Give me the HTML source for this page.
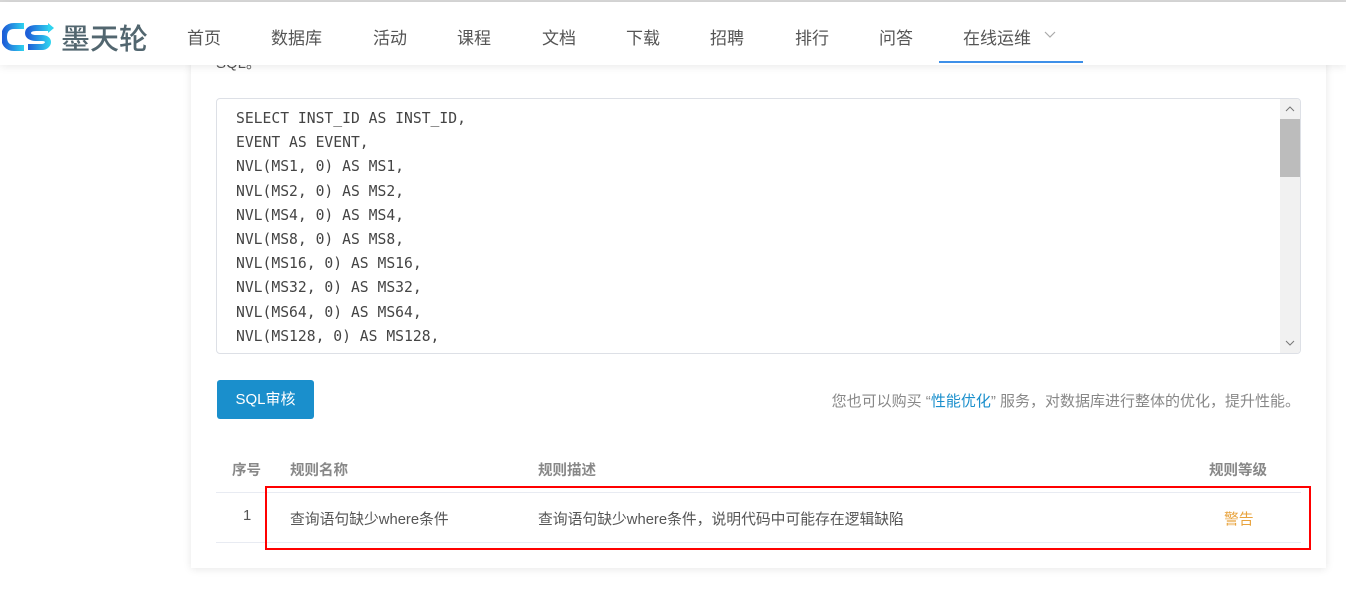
<!DOCTYPE html>
<html><head><meta charset="utf-8"><style>
*{box-sizing:border-box;margin:0;padding:0}
body{width:1346px;height:591px;overflow:hidden;background:#fff;font-family:"Liberation Sans","Noto Sans CJK SC",sans-serif;position:relative}
.top{position:absolute;left:0;top:0;width:1346px;height:2px;background:#d8d8d8}
.hdr{position:absolute;left:0;top:2px;width:1346px;height:63px;background:#fff;box-shadow:0 2px 8px rgba(0,0,0,.08);z-index:5}
.nav{position:absolute;top:22px;font-size:17px;color:#555}
.ul{position:absolute;left:939px;top:61px;width:144px;height:2px;background:#3d8fe8}
.card{position:absolute;left:191px;top:40px;width:1135px;height:528px;background:#fff;box-shadow:0 1px 8px rgba(0,0,0,.1)}
.ta{position:absolute;left:216px;top:98px;width:1085px;height:256px;border:1px solid #dde0e6;border-radius:4px;overflow:hidden;background:#fff}
.code{position:absolute;left:19px;top:8px;font-family:"DejaVu Sans Mono","Liberation Mono",monospace;font-size:14.7px;line-height:24.2px;color:#444;white-space:pre}
.sb{position:absolute;right:0;top:0;width:20px;height:254px;background:#f1f1f1}
.btn{position:absolute;left:217px;top:380px;width:97px;height:39px;background:#1a8fcc;border-radius:3px;color:#fff;font-size:15px;text-align:center;line-height:39px}
.tip{position:absolute;right:46px;top:390px;font-size:15px;color:#888}
.th{position:absolute;top:459px;font-size:14.5px;color:#888;font-weight:bold}
.td{position:absolute;top:508px;font-size:14.8px;color:#555}
.line{position:absolute;left:216px;width:1085px;height:1px;background:#e8ebf2}
.red{position:absolute;left:265px;top:486px;width:1046px;height:64px;border:2px solid #f00}
</style></head><body>
<div class="top"></div>
<div class="card"></div>
<div style="position:absolute;left:216px;top:52px;font-size:15px;color:#555">SQL。</div>
<div class="hdr">
<svg style="position:absolute;left:2px;top:20px" width="54" height="30" viewBox="0 0 54 30"><defs><linearGradient id="g" x1="0" x2="1"><stop offset="0" stop-color="#1e5fd8"/><stop offset="1" stop-color="#2fd3ef"/></linearGradient></defs><path d="M22 4H12C5 4 2 9 2 15s3 11 10 11h10" fill="none" stroke="url(#g)" stroke-width="6"/><path d="M48 6H34c-5 0-8 2-8 5s3 5 8 5h6c4 0 6 2 6 4s-2 5-6 5H26" fill="none" stroke="url(#g)" stroke-width="6"/><path d="M46 1l6 5-6 5z" fill="#2fd3ef"/></svg>
<div style="position:absolute;left:61px;top:14px;font-size:29px;color:#52666f;font-weight:500">墨天轮</div>
<div class="nav" style="left:187px">首页</div>
<div class="nav" style="left:271px">数据库</div>
<div class="nav" style="left:373px">活动</div>
<div class="nav" style="left:457px">课程</div>
<div class="nav" style="left:542px">文档</div>
<div class="nav" style="left:626px">下载</div>
<div class="nav" style="left:710px">招聘</div>
<div class="nav" style="left:795px">排行</div>
<div class="nav" style="left:879px">问答</div>
<div class="nav" style="left:963px">在线运维</div>
<svg style="position:absolute;left:1044px;top:29px" width="12" height="8" viewBox="0 0 12 8"><path d="M1 1l5 5 5-5" fill="none" stroke="#aaa" stroke-width="1.2"/></svg>
</div>
<div class="ul" style="z-index:6"></div>
<div class="ta"><div class="code">SELECT INST_ID AS INST_ID,
EVENT AS EVENT,
NVL(MS1, 0) AS MS1,
NVL(MS2, 0) AS MS2,
NVL(MS4, 0) AS MS4,
NVL(MS8, 0) AS MS8,
NVL(MS16, 0) AS MS16,
NVL(MS32, 0) AS MS32,
NVL(MS64, 0) AS MS64,
NVL(MS128, 0) AS MS128,
NVL(MS256, 0) AS MS256,</div>
<div class="sb"><div style="position:absolute;top:20px;left:0;width:20px;height:58px;background:#bcbcbc"></div>
<svg style="position:absolute;top:7px;left:5px" width="10" height="6" viewBox="0 0 10 6"><path d="M1 5l4-4 4 4" fill="none" stroke="#777"/></svg>
<svg style="position:absolute;bottom:7px;left:5px" width="10" height="6" viewBox="0 0 10 6"><path d="M1 1l4 4 4-4" fill="none" stroke="#777"/></svg></div></div>
<div class="btn">SQL审核</div>
<div class="tip">您也可以购买 “<span style="color:#1a8fcc">性能优化</span>” 服务，对数据库进行整体的优化，提升性能。</div>
<div class="th" style="left:232px">序号</div>
<div class="th" style="left:290px">规则名称</div>
<div class="th" style="left:538px">规则描述</div>
<div class="th" style="left:1209px">规则等级</div>
<div class="line" style="top:492px"></div>
<div class="line" style="top:542px"></div>
<div class="td" style="left:243px">1</div>
<div class="td" style="left:290px">查询语句缺少where条件</div>
<div class="td" style="left:538px">查询语句缺少where条件，说明代码中可能存在逻辑缺陷</div>
<div class="td" style="left:1224px;color:#e8a33d">警告</div>
<div class="red"></div>
</body></html>
